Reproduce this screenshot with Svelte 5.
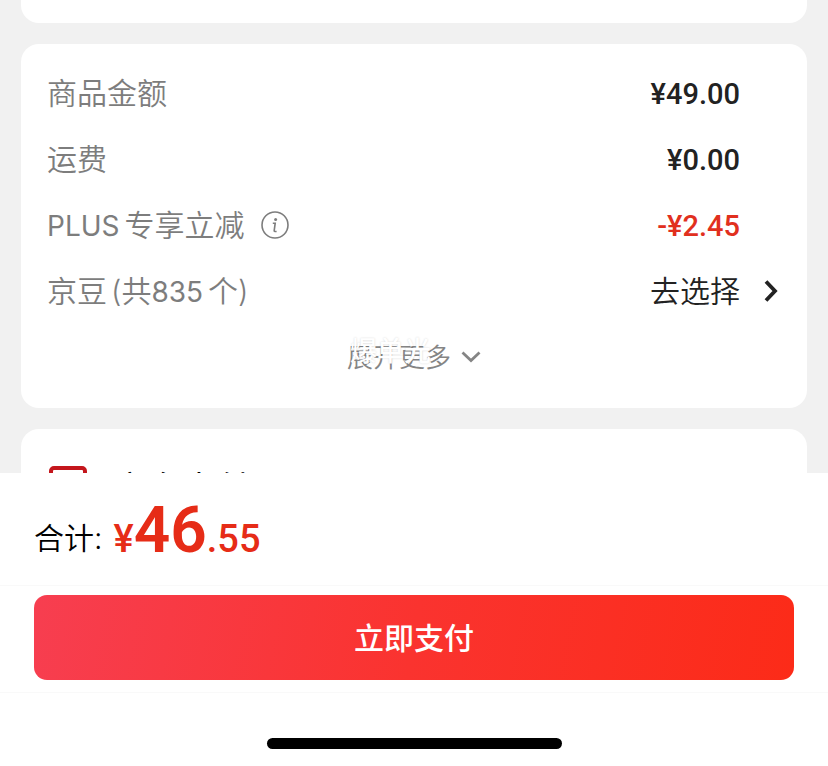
<script>
    const rows = [
        { label: "商品金额", value: "¥49.00" },
        { label: "运费", value: "¥0.00" },
        { prefix: "PLUS", label: "专享立减", value: "-¥2.45", info: true, minus: true },
    ]

    const beans = 835
    const total = { whole: "46", cents: ".55" }
</script>

<div class="page">
    <main class="content">
        <section class="card tail"></section>

        <section class="card prices">
            {#each rows as row}
                <div class="row">
                    <span class="label">
                        {#if row.prefix}<span class="latin">{row.prefix}</span>{/if}{row.label}
                    </span>
                    {#if row.info}
                        <button class="info" aria-label="说明">
                            <svg width="28" height="28" viewBox="0 0 28 28" fill="none" stroke="#7d7d7d">
                                <circle cx="14" cy="14" r="13" stroke-width="1.6" />
                                <circle cx="14.6" cy="8.4" r="1.5" fill="#7d7d7d" stroke="none" />
                                <path d="M11.8 12.2h2.4l-1 7.4q-.1 1 .8.9h1.6" stroke-width="1.6" />
                            </svg>
                        </button>
                    {/if}
                    <span class="value" class:minus={row.minus}>{row.value}</span>
                </div>
            {/each}

            <div class="row">
                <span class="label">京豆<span class="count">(共</span><span class="latin">{beans}</span>个)</span>
                <button class="choose">
                    <span>去选择</span>
                    <svg width="14" height="22" viewBox="0 0 14 22" fill="none" stroke="#222" stroke-width="3.8">
                        <path d="M2 1.5l9 9.5-9 9.5" />
                    </svg>
                </button>
            </div>

            <div class="more-row">
                <button class="more">
                    <span>展开更多</span>
                    <svg width="20" height="12" viewBox="0 0 20 12" fill="none" stroke="#858585" stroke-width="2.8">
                        <path d="M1.5 1.5L10 9.5l8.5-8" />
                    </svg>
                </button>
                <span class="watermark">爆单光</span>
            </div>
        </section>

        <section class="card pay">
            <svg width="40" height="40" viewBox="0 0 40 40" fill="none" stroke="#c4161c" stroke-width="4">
                <rect x="3" y="3" width="34" height="34" rx="3" />
            </svg>
            <span>京东支付</span>
        </section>
    </main>

    <footer>
        <div class="total">
            <span class="total-label">合计:</span>
            <span class="sum">¥<strong>{total.whole}</strong>{total.cents}</span>
        </div>
        <div class="action">
            <button class="submit">立即支付</button>
        </div>
        <div class="home"></div>
    </footer>
</div>

<style>
    :global(body) {
        margin: 0;
        background: #fff;
    }

    .page {
        display: flex;
        flex-direction: column;
        height: 100vh;
        font-family: "Inter", "Noto Sans CJK SC", sans-serif;
        font-size: 30px;
        color: #222;
    }

    button {
        padding: 0;
        border: none;
        background: none;
        font: inherit;
        color: inherit;
        cursor: pointer;
    }

    svg {
        display: block;
        flex: none;
    }

    .content {
        flex: 1;
        min-height: 0;
        overflow: hidden;
        background: #f1f1f1;
    }

    .card {
        margin: 0 21px 21px;
        border-radius: 18px;
        background: #fff;
    }

    .tail {
        height: 23px;
        border-radius: 0 0 18px 18px;
    }

    .prices {
        padding: 16px 26px 20px;
    }

    .row {
        display: flex;
        align-items: center;
        height: 66px;
    }

    .label {
        padding-bottom: 4px;
        color: #7d7d7d;
        font-weight: 350;
    }

    .latin {
        margin-right: 5px;
        font-size: 28px;
        font-weight: 400;
    }

    .count {
        margin-left: 4px;
    }

    .info {
        margin-left: 16px;
    }

    .value {
        margin-left: auto;
        padding: 2px 41px 0 0;
        font-family: "Roboto", sans-serif;
        font-size: 29px;
        font-weight: 500;
    }

    .minus {
        color: #e1301e;
    }

    .choose {
        display: flex;
        align-items: center;
        gap: 24px;
        margin-left: auto;
        padding-right: 3px;
        font-weight: 350;
    }

    .choose span,
    .more span {
        padding-bottom: 4px;
    }

    .more-row {
        position: relative;
        display: flex;
        justify-content: center;
        height: 64px;
    }

    .more {
        display: flex;
        align-items: center;
        gap: 10px;
        padding-top: 2px;
        font-size: 26px;
        font-weight: 350;
        color: #858585;
    }

    .watermark {
        position: absolute;
        top: 8px;
        left: 50%;
        margin-left: -64px;
        font-size: 27px;
        line-height: 40px;
        font-weight: 500;
        color: #fff;
        text-shadow: 0 0 2px rgba(0, 0, 0, 0.16);
        pointer-events: none;
    }

    .pay {
        display: flex;
        align-items: center;
        gap: 26px;
        padding: 32px 27px;
        font-size: 34px;
        line-height: 40px;
        color: #000;
    }

    .pay span {
        padding-top: 8px;
    }

    footer {
        background: #fff;
    }

    .total {
        display: flex;
        align-items: center;
        gap: 11px;
        height: 92px;
        padding: 16px 34px 4px;
        border-bottom: 1px solid #f9f9f9;
    }

    .total-label {
        padding-top: 2px;
        color: #000;
        font-weight: 350;
    }

    .sum {
        font-family: "Roboto", sans-serif;
        font-size: 38px;
        font-weight: 500;
        line-height: 76px;
        color: #e62c17;
    }

    .sum strong {
        font-size: 64px;
        font-weight: 600;
    }

    .action {
        padding: 9px 34px 12px;
        border-bottom: 1px solid #f9f9f9;
    }

    .submit {
        display: block;
        width: 100%;
        height: 85px;
        padding-bottom: 4px;
        border-radius: 13px;
        background: linear-gradient(100deg, #f73e50, #fa332f 50%, #fc2b18);
        color: #fff;
        font-weight: 500;
    }

    .home {
        width: 295px;
        height: 11px;
        margin: 45px auto 17px;
        border-radius: 6px;
        background: #000;
    }
</style>
